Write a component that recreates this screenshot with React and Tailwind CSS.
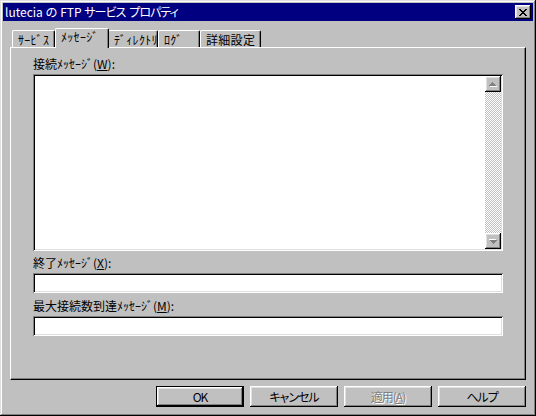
import React from 'react'

// Win95 style bevels
const raised = 'shadow-[inset_-1px_-1px_#000,inset_1px_1px_#fff,inset_-2px_-2px_#808080,inset_2px_2px_#dfdfdf]'
const sunken = 'shadow-[inset_1px_1px_#808080,inset_-1px_-1px_#fff,inset_2px_2px_#000,inset_-2px_-2px_#dfdfdf]'
// proportional kana, tighter like MS UI Gothic
const prop = "[font-feature-settings:'palt'] tracking-[-1px]"

const CloseGlyph = () => (
  <svg width="8" height="7" shapeRendering="crispEdges">
    <path d="M0 0h2v1H0zM6 0h2v1H6zM1 1h2v1H1zM5 1h2v1H5zM2 2h4v1H2zM3 3h2v1H3zM2 4h4v1H2zM1 5h2v1H1zM5 5h2v1H5zM0 6h2v1H0zM6 6h2v1H6z" fill="#000" />
  </svg>
)

const Arrow = ({ down }) => (
  <svg width="8" height="5" shapeRendering="crispEdges" className={down ? 'rotate-180' : ''}>
    <path d="M4 1h1v1H4zM3 2h3v1H3zM2 3h5v1H2zM1 4h7v1H1z" fill="#fff" />
    <path d="M3 0h1v1H3zM2 1h3v1H2zM1 2h5v1H1zM0 3h7v1H0z" fill="#808080" />
  </svg>
)

const Tab = ({ label, width, active }) => (
  <div
    className={`${width} flex items-center pl-[5px] border-t border-l border-white border-r border-r-black rounded-t-[2px] shadow-[inset_-1px_0_#808080] bg-[#c0c0c0] ${
      active ? 'h-[20px] -mb-[1px] relative z-10 pb-[3px] -mx-[1px]' : 'h-[17px] pt-[1px]'
    }`}
  >
    <span className="whitespace-nowrap tracking-[0.3px]">{label}</span>
  </div>
)

const Field = ({ className = '' }) => (
  <div className={`w-[470px] bg-white ${sunken} ${className}`} />
)

const Button = ({ children, isDefault, disabled }) => (
  <div
    className={`w-[88px] h-[21px] flex items-center justify-center ${
      isDefault ? 'border border-black' : ''
    }`}
  >
    <div className={`w-full h-full flex items-center justify-center ${raised}`}>
      <span className={`${prop} ${disabled ? 'text-[#808080] [text-shadow:1px_1px_#fff]' : ''}`}>{children}</span>
    </div>
  </div>
)

export default function App() {
  return (
    <div className="w-[536px] h-[416px] bg-[#c0c0c0] p-[3px] flex flex-col text-[12px] leading-[12px] text-black font-['Noto_Sans_CJK_JP','Noto_Sans',sans-serif] shadow-[inset_-1px_-1px_#000,inset_1px_1px_#dfdfdf,inset_-2px_-2px_#808080,inset_2px_2px_#fff]">
      {/* Title bar */}
      <div className="h-[18px] bg-[#000080] flex items-center justify-between pl-[2px] pr-[2px]">
        <span className="text-white text-[12px] leading-[12px] whitespace-pre">
          lutecia の FTP <span className={prop}>サービス</span><span className={`ml-[4px] ${prop}`}>プロパティ</span>
        </span>
        <div className={`w-[16px] h-[14px] bg-[#c0c0c0] flex items-center justify-center ${raised}`}>
          <CloseGlyph />
        </div>
      </div>

      {/* Tabs + panel */}
      <div className="ml-[7px] mt-[7px] w-[516px] flex flex-col">
        <div className="h-[19px] flex items-end pl-[2px]">
          <Tab label="ｻｰﾋﾞｽ" width="w-[43px]" />
          <div className="w-[1px]" />
          <Tab label="ﾒｯｾｰｼﾞ" width="w-[54px]" active />
          <Tab label="ﾃﾞｨﾚｸﾄﾘ" width="w-[50px]" />
          <Tab label="ﾛｸﾞ" width="w-[42px]" />
          <Tab label="詳細設定" width="w-[61px]" />
        </div>

        <div className="h-[333px] border-t border-l border-white border-r border-b border-r-black border-b-black shadow-[inset_-1px_-1px_#808080] pl-[22px] pt-[10px] flex flex-col">
          <div className="whitespace-nowrap">
            接続ﾒｯｾｰｼﾞ(<span className="underline">W</span>):
          </div>
          <div className={`mt-[4px] w-[470px] h-[177px] bg-white ${sunken} p-[2px] flex justify-end`}>
            <div className="w-[16px] h-full flex flex-col">
              <div className={`h-[16px] bg-[#c0c0c0] flex items-center justify-center ${raised}`}>
                <Arrow />
              </div>
              <div className="flex-1 bg-[image:repeating-conic-gradient(#fff_0%_25%,#c0c0c0_0%_50%)] bg-[length:2px_2px]" />
              <div className={`h-[16px] bg-[#c0c0c0] flex items-center justify-center ${raised}`}>
                <Arrow down />
              </div>
            </div>
          </div>

          <div className="mt-[6px] whitespace-nowrap">
            終了ﾒｯｾｰｼﾞ(<span className="underline">X</span>):
          </div>
          <Field className="mt-[4px] h-[20px]" />

          <div className="mt-[7px] whitespace-nowrap">
            最大接続数到達ﾒｯｾｰｼﾞ(<span className="underline">M</span>):
          </div>
          <Field className="mt-[4px] h-[20px]" />
        </div>
      </div>

      {/* Buttons */}
      <div className="mt-[6px] mr-[7px] flex justify-end gap-[6px]">
        <Button isDefault>OK</Button>
        <Button>キャンセル</Button>
        <Button disabled>
          適用(<span className="underline">A</span>)
        </Button>
        <Button>ヘルプ</Button>
      </div>
    </div>
  )
}
